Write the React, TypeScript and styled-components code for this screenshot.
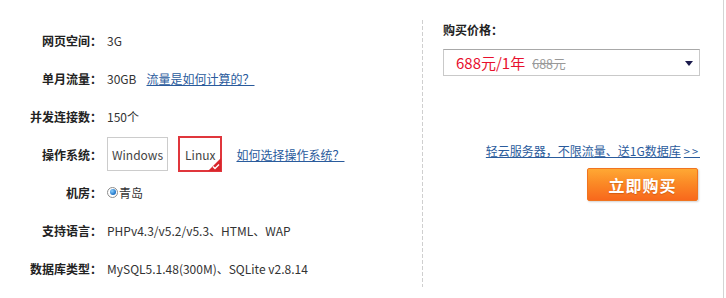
import React from 'react';
import styled, { createGlobalStyle } from 'styled-components';

const GlobalStyle = createGlobalStyle`
  body {
    margin: 0;
    background: #fff;
    font-family: "Noto Sans CJK SC", "Microsoft YaHei", sans-serif;
    color: #333;
  }
`;

const Page = styled.div`
  display: flex;
  width: 726px;
  height: 298px;
  overflow: hidden;
`;

const LeftPanel = styled.div`
  width: 422px;
  padding-top: 21px;
  box-sizing: border-box;
`;

const Divider = styled.div`
  width: 1px;
  margin: 20px 0 11px;
  background: repeating-linear-gradient(to bottom, #cfcfcf 0 4px, transparent 4px 6px);
`;

const RightPanel = styled.div`
  width: 301px;
  border-right: 1px solid #d4d4d4;
  padding: 20px 0 0 20px;
  box-sizing: border-box;
  display: flex;
  flex-direction: column;
`;

const Row = styled.div<{ $h?: number }>`
  display: flex;
  align-items: center;
  height: ${(p) => p.$h ?? 38}px;
  font-size: 12px;
`;

const Label = styled.div`
  width: 102px;
  text-align: right;
  font-weight: bold;
  color: #222;
  flex-shrink: 0;
`;

const Value = styled.div`
  margin-left: 5px;
  display: flex;
  align-items: center;
  color: #333;
`;

const Link = styled.a<{ $ml?: number }>`
  color: #2a5b9c;
  text-decoration: underline;
  margin-left: ${(p) => p.$ml ?? 0}px;
  cursor: pointer;
`;

const OsBox = styled.div<{ $active?: boolean }>`
  position: relative;
  box-sizing: border-box;
  height: ${(p) => (p.$active ? 36 : 34)}px;
  padding: 0 ${(p) => (p.$active ? 5 : 4)}px;
  display: flex;
  align-items: center;
  font-size: 12px;
  color: #444;
  border: ${(p) => (p.$active ? '2px solid #e0363c' : '1px solid #cccccc')};
  margin-right: 10px;
`;

const Corner = styled.div`
  position: absolute;
  right: -1px;
  bottom: -1px;
  width: 0;
  height: 0;
  border-style: solid;
  border-width: 0 0 13px 13px;
  border-color: transparent transparent #d8262c transparent;
`;

const Check = styled.svg`
  position: absolute;
  right: 0;
  bottom: 0;
`;

const Radio = styled.span`
  display: inline-block;
  width: 11px;
  height: 11px;
  border-radius: 50%;
  border: 1px solid #8d8d8d;
  box-sizing: border-box;
  background: #fff;
  margin-right: 1px;
  position: relative;
  &::after {
    content: '';
    position: absolute;
    left: 1.5px;
    top: 1.5px;
    width: 6px;
    height: 6px;
    border-radius: 50%;
    background: radial-gradient(circle at 35% 35%, #8ad0ff, #1a6fc4 70%, #0c4b8e);
  }
`;

const PriceLabel = styled.div`
  font-size: 12px;
  font-weight: bold;
  color: #222;
  height: 20px;
  line-height: 20px;
`;

const Select = styled.div`
  margin-top: 9px;
  width: 257px;
  height: 27px;
  box-sizing: border-box;
  border: 1px solid #c9c9c9;
  border-top-color: #a8a8a8;
  display: flex;
  align-items: center;
  padding: 0 0 0 12px;
  position: relative;
`;

const Price = styled.span`
  color: #e8102e;
  font-size: 15px;
`;

const OldPrice = styled.span`
  color: #999;
  font-size: 12.5px;
  text-decoration: line-through;
  margin-left: 7px;
  margin-top: 2px;
`;

const Arrow = styled.span`
  position: absolute;
  right: 6px;
  top: 11px;
  width: 0;
  height: 0;
  border-left: 4px solid transparent;
  border-right: 4px solid transparent;
  border-top: 5px solid #1b1b4d;
`;

const PromoLink = styled(Link)`
  margin-top: 67px;
  align-self: flex-end;
  margin-right: 23px;
  font-size: 12px;
  line-height: 16px;
`;

const Chevrons = styled.span`
  letter-spacing: 2px;
  margin-left: 3px;
  font-size: 11px;
`;

const BuyButton = styled.button`
  align-self: flex-end;
  margin: 9px 25px 0 0;
  width: 111px;
  height: 33px;
  border: 1px solid #f07420;
  border-radius: 2px;
  background: linear-gradient(to bottom, #ffa834 0%, #fb8a26 45%, #f8681c 100%);
  box-shadow: 1px 1px 2px rgba(0, 0, 0, 0.18);
  color: #fff;
  font-family: "Noto Sans CJK SC", sans-serif;
  font-size: 16px;
  font-weight: bold;
  letter-spacing: 1px;
  text-shadow: 0 1px 1px rgba(160, 60, 0, 0.4);
  cursor: pointer;
`;

const App = () => {
  return (
    <Page>
      <GlobalStyle />
      <LeftPanel>
        <Row>
          <Label>网页空间：</Label>
          <Value>3G</Value>
        </Row>
        <Row>
          <Label>单月流量：</Label>
          <Value>
            30GB
            <Link $ml={10}>流量是如何计算的？</Link>
          </Value>
        </Row>
        <Row>
          <Label>并发连接数：</Label>
          <Value>150个</Value>
        </Row>
        <Row>
          <Label>操作系统：</Label>
          <Value>
            <OsBox>Windows</OsBox>
            <OsBox $active>
              Linux
              <Corner />
              <Check width="8" height="7" viewBox="0 0 8 7">
                <path d="M1 3.5 L3 5.5 L7 1.5" stroke="#fff" strokeWidth="1.4" fill="none" />
              </Check>
            </OsBox>
            <Link $ml={4}>如何选择操作系统？</Link>
          </Value>
        </Row>
        <Row>
          <Label>机房：</Label>
          <Value>
            <Radio />
            青岛
          </Value>
        </Row>
        <Row>
          <Label>支持语言：</Label>
          <Value>PHPv4.3/v5.2/v5.3、HTML、WAP</Value>
        </Row>
        <Row>
          <Label>数据库类型：</Label>
          <Value>MySQL5.1.48(300M)、SQLite v2.8.14</Value>
        </Row>
      </LeftPanel>
      <Divider />
      <RightPanel>
        <PriceLabel>购买价格：</PriceLabel>
        <Select>
          <Price>688元/1年</Price>
          <OldPrice>688元</OldPrice>
          <Arrow />
        </Select>
        <PromoLink>
          轻云服务器，不限流量、送1G数据库<Chevrons>&gt;&gt;</Chevrons>
        </PromoLink>
        <BuyButton>立即购买</BuyButton>
      </RightPanel>
    </Page>
  );
};

export default App;
